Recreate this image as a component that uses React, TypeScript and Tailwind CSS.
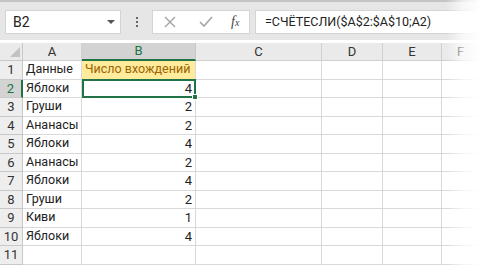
import React from "react";

const rows: [string, string][] = [
  ["Данные", "Число вхождений"],
  ["Яблоки", "4"],
  ["Груши", "2"],
  ["Ананасы", "2"],
  ["Яблоки", "4"],
  ["Ананасы", "2"],
  ["Яблоки", "4"],
  ["Груши", "2"],
  ["Киви", "1"],
  ["Яблоки", "4"],
  ["", ""],
];

const font = { fontFamily: 'Roboto, "Noto Sans", sans-serif' };

function Toolbar() {
  return (
    <div className="h-[40px] bg-[#e6e6e6] border-t-2 border-[#c4c4c4] flex items-start pt-[8px]">
      {/* Name box */}
      <div className="ml-[5px] w-[116px] h-[24px] bg-white border border-[#d4d4d4] flex items-center justify-between pl-[7px] pr-[5px]">
        <span className="text-[14px] text-[#222]">B2</span>
        <span className="w-0 h-0 border-l-[4px] border-r-[4px] border-t-[4px] border-l-transparent border-r-transparent border-t-[#555]" />
      </div>
      {/* Dots */}
      <div className="w-[31px] h-[24px] flex flex-col items-center justify-center gap-[2px]">
        <span className="w-[2px] h-[2px] bg-[#666]" />
        <span className="w-[2px] h-[2px] bg-[#666]" />
        <span className="w-[2px] h-[2px] bg-[#666]" />
      </div>
      {/* Buttons */}
      <div className="w-[98px] h-[24px] bg-white border border-[#d4d4d4] flex items-center pl-[11px]">
        <svg width="12" height="12" viewBox="0 0 12 12" stroke="#a6a6a6" strokeWidth="1.4" fill="none">
          <line x1="1" y1="1" x2="11" y2="11" />
          <line x1="11" y1="1" x2="1" y2="11" />
        </svg>
        <svg className="ml-[23px]" width="14" height="12" viewBox="0 0 14 12" stroke="#a6a6a6" strokeWidth="1.6" fill="none">
          <polyline points="1,6 5,10 13,1" />
        </svg>
        <span
          className="ml-[18px] text-[14px] italic text-[#444] leading-none"
          style={{ fontFamily: '"Liberation Serif", serif' }}
        >
          f<span className="text-[10px]">x</span>
        </span>
      </div>
      {/* Formula input */}
      <div className="ml-[5px] flex-1 h-[24px] bg-white border border-[#d4d4d4] flex items-center pl-[9px]">
        <span className="text-[12.5px] text-[#222]">=СЧЁТЕСЛИ($A$2:$A$10;A2)</span>
      </div>
    </div>
  );
}

const colWidths = ["w-[59px]", "w-[114px]", "w-[126px]", "w-[61px]", "w-[59px]", "flex-1"];
const colNames = ["A", "B", "C", "D", "E", "F"];

function Header() {
  return (
    <div className="flex h-[18px] mt-[3px]">
      <div className="w-[23px] bg-[#eaeaea] border-r border-b border-[#c8c8c8] flex items-end justify-end pr-[2px] pb-[3px]">
        <svg width="10" height="10" viewBox="0 0 10 10">
          <polygon points="10,0 10,10 0,10" fill="#c2c2c2" />
        </svg>
      </div>
      {colNames.map((c, i) => (
        <div
          key={c}
          className={`${colWidths[i]} flex items-center justify-center text-[13px] ${
            c === "B"
              ? "bg-[#d3d3d3] text-[#217346] border-b-2 border-[#217346] border-r border-r-[#c8c8c8]"
              : "bg-[#eaeaea] text-[#333] border-b border-r border-[#cfcfcf]"
          }`}
        >
          {c}
        </div>
      ))}
    </div>
  );
}

function Row({ n, a, b }: { n: number; a: string; b: string }) {
  const sel = n === 2;
  return (
    <div className="flex h-[18.5px]">
      <div
        className={`w-[23px] flex items-center justify-center text-[13px] border-b ${
          sel
            ? "bg-[#d3d3d3] text-[#217346] border-r-2 border-r-[#217346] border-b-[#c8c8c8]"
            : "bg-[#eeeeee] text-[#333] border-r border-[#c8c8c8]"
        }`}
      >
        {n}
      </div>
      <div className="w-[59px] flex items-center pl-[3px] text-[12.5px] text-[#222] border-r border-b border-[#d9d9d9] whitespace-nowrap">
        {a}
      </div>
      {n === 1 ? (
        <div className="w-[114px] flex items-center pl-[3px] text-[12.5px] text-[#9c6500] bg-[#ffeb9c] border-r border-b border-[#d9d9d9] whitespace-nowrap">
          {b}
        </div>
      ) : sel ? (
        <div className="w-[114px] relative flex items-center justify-end pr-[2px] text-[13px] text-[#222] border-2 border-[#217346] -mt-[1px] h-[19.5px]">
          {b}
          <span className="absolute -right-[4px] -bottom-[4px] w-[6px] h-[6px] bg-[#217346] border border-white" />
        </div>
      ) : (
        <div className="w-[114px] flex items-center justify-end pr-[3px] text-[13px] text-[#222] border-r border-b border-[#d9d9d9]">
          {b}
        </div>
      )}
      <div className="w-[126px] border-r border-b border-[#d9d9d9]" />
      <div className="w-[61px] border-r border-b border-[#d9d9d9]" />
      <div className="w-[59px] border-r border-b border-[#d9d9d9]" />
      <div className="flex-1 border-b border-[#d9d9d9]" />
    </div>
  );
}

export default function App() {
  return (
    <div className="w-[480px] h-[273px] relative overflow-hidden bg-white" style={font}>
      <Toolbar />
      <Header />
      {rows.map(([a, b], i) => (
        <Row key={i} n={i + 1} a={a} b={b} />
      ))}
      {/* Fade to white on the right edge */}
      <div className="absolute top-0 right-0 w-[34px] h-full bg-gradient-to-l from-white via-white/70 to-transparent" />
    </div>
  );
}
